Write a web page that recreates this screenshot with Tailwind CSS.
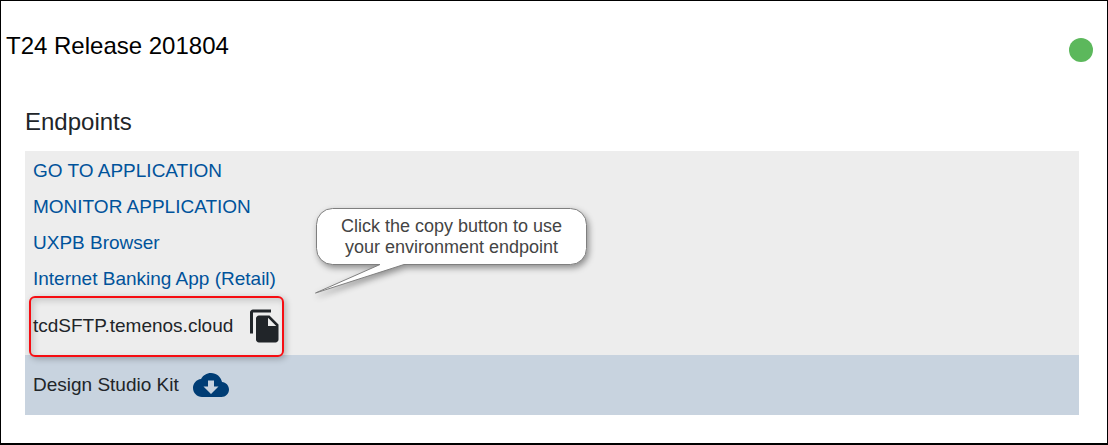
<!DOCTYPE html>
<html lang="en">
<head>
<meta charset="utf-8">
<meta name="viewport" content="width=device-width, initial-scale=1">
<title>T24 Release 201804</title>
<script src="https://cdn.jsdelivr.net/npm/@tailwindcss/browser@4"></script>
</head>
<body class="bg-white font-['Liberation_Sans',Arial,sans-serif] text-[#212529]">
<main class="min-h-screen border border-b-2 border-black pb-7">
  <header class="flex items-center justify-between pt-7 pr-3.5 pl-[5px]">
    <h1 class="text-2xl leading-7 text-black">T24 Release 201804</h1>
    <span role="img" aria-label="Status: running" class="mt-[9px] size-6 rounded-full bg-[#5cb85c]"></span>
  </header>
  <section class="mt-11 mr-7 ml-6">
    <h2 class="text-2xl leading-8">Endpoints</h2>
    <div class="relative mt-[13px] text-[19px]">
      <div class="bg-[#ededed] px-2 pt-0.5">
        <ul class="leading-9 text-[#00539b]">
          <li><a href="#application">GO TO APPLICATION</a></li>
          <li><a href="#monitor">MONITOR APPLICATION</a></li>
          <li><a href="#uxpb">UXPB Browser</a></li>
          <li><a href="#retail">Internet Banking App (Retail)</a></li>
        </ul>
        <div class="relative flex h-[58px] w-fit items-center gap-3.5">
          <span>tcdSFTP.temenos.cloud</span>
          <button type="button" aria-label="Copy endpoint" class="size-9">
            <svg viewBox="0 0 24 24" class="size-9" fill="currentColor" aria-hidden="true"><path d="M16 1H4c-1.1 0-2 .9-2 2v14h2V3h12V1zm-1 4l6 6v10c0 1.1-.9 2-2 2H7.99C6.89 23 6 22.1 6 21l.01-14c0-1.1.89-2 1.99-2h7zm-1 7h5.5L14 6.5V12z"/></svg>
          </button>
          <span class="pointer-events-none absolute -top-px -right-px -bottom-0.5 -left-1 rounded-md border-2 border-[#f60d12] shadow-[2px_2px_6px_rgba(0,0,0,0.25),inset_3px_3px_6px_rgba(0,0,0,0.15)]"></span>
        </div>
      </div>
      <div class="flex h-15 items-center gap-3.5 bg-[#c8d3df] px-2">
        <span>Design Studio Kit</span>
        <button type="button" aria-label="Download Design Studio Kit" class="size-9 text-[#003d75]">
          <svg viewBox="0 0 24 24" class="size-9" fill="currentColor" aria-hidden="true"><path d="M19.35 10.04C18.67 6.59 15.64 4 12 4 9.11 4 6.6 5.64 5.35 8.04 2.34 8.36 0 10.91 0 14c0 3.31 2.69 6 6 6h13c2.76 0 5-2.24 5-5 0-2.64-2.05-4.78-4.65-4.96zM17 13l-5 5-5-5h3V9h4v4h3z"/></svg>
        </button>
      </div>
      <div role="note" class="absolute top-[57px] left-[291px] h-[57px] w-[271px] pt-2 text-center text-lg leading-[21px] text-[#444]">
        <svg viewBox="0 0 271 87" class="absolute top-0 left-0 h-[87px] w-[271px] overflow-visible drop-shadow-[2px_3px_3px_rgba(0,0,0,0.4)]" aria-hidden="true"><path d="M16.500 .5H254.500a16 16 0 0 1 16 16V40.500a16 16 0 0 1-16 16H88L-.5 85 64 56.500H16.500a16 16 0 0 1-16-16V16.500a16 16 0 0 1 16-16z" fill="#fff" stroke="#7f7f7f"/></svg>
        <p class="relative">Click the copy button to use<br>your environment endpoint</p>
      </div>
    </div>
  </section>
</main>
</body>
</html>
